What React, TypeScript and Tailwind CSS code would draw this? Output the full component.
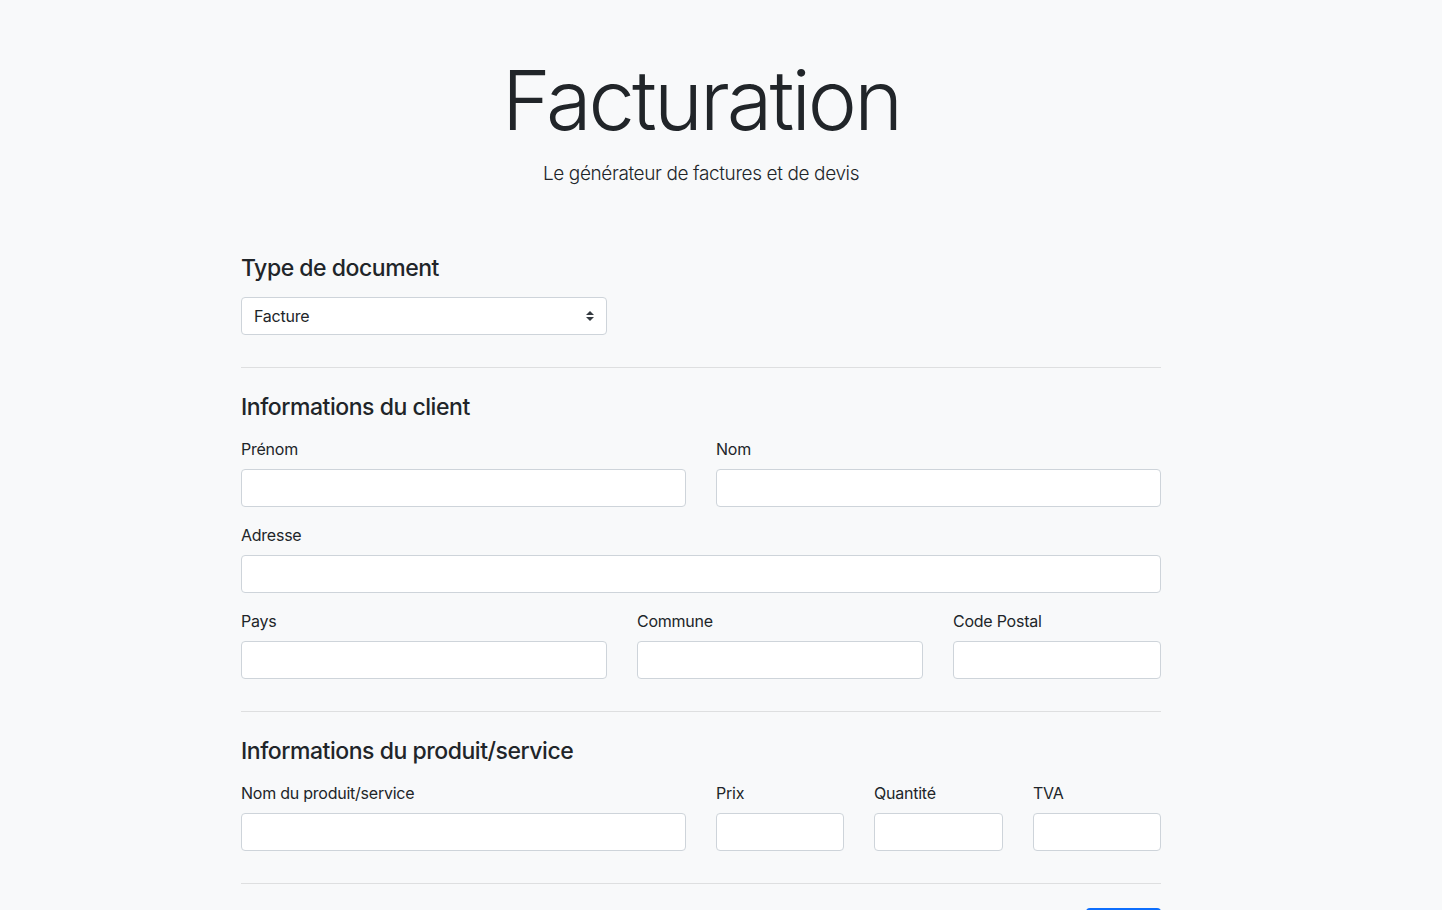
import React from "react";

const inputCls =
  "block w-full h-[38px] rounded-[4px] border border-[#ced4da] bg-white px-3 text-[16px] text-[#495057] outline-none";

function Field({ label, className = "" }: { label: string; className?: string }) {
  return (
    <div className={className}>
      <label className="block text-[16px] leading-[24px] mb-2 tracking-[-0.015em]">{label}</label>
      <input type="text" className={inputCls} />
    </div>
  );
}

export default function App() {
  return (
    <div
      className="min-h-[960px] w-full bg-[#f8f9fa] text-[#212529]"
      style={{ fontFamily: "Inter, 'Noto Sans', sans-serif" }}
    >
      <div className="mx-auto w-[960px] pr-[40px]">
        <div className="w-[920px] pt-[52px]">
          <h1 className="text-center text-[83px] leading-[96px] font-light tracking-[-0.035em]">
            Facturation
          </h1>
          <p className="mt-[11px] text-center text-[19px] leading-[30px] font-light tracking-[-0.02em]">
            Le générateur de factures et de devis
          </p>

          <h4 className="mt-[65px] text-[23px] leading-[29px] font-medium tracking-[-0.02em]">
            Type de document
          </h4>
          <div className="mt-[14px] relative w-[366px]">
            <select className="block w-full h-[38px] appearance-none rounded-[4px] border border-[#ced4da] bg-white pl-3 pr-8 text-[16px] text-[#212529] outline-none tracking-[-0.015em]">
              <option>Facture</option>
              <option>Devis</option>
            </select>
            <svg
              className="pointer-events-none absolute right-[13px] top-[14px]"
              width="8"
              height="10"
              viewBox="0 0 4 5"
            >
              <path d="M2 0L0 2h4zm0 5L0 3h4z" fill="#343a40" />
            </svg>
          </div>

          <hr className="mt-8 border-0 border-t border-[rgba(0,0,0,0.1)]" />

          <h4 className="mt-[25px] text-[23px] leading-[29px] font-medium tracking-[-0.02em]">
            Informations du client
          </h4>
          <div className="mt-[15px] grid grid-cols-2 gap-x-[30px]">
            <Field label="Prénom" />
            <Field label="Nom" />
          </div>
          <Field label="Adresse" className="mt-4" />
          <div className="mt-4 grid grid-cols-[366px_286px_208px] gap-x-[30px]">
            <Field label="Pays" />
            <Field label="Commune" />
            <Field label="Code Postal" />
          </div>

          <hr className="mt-8 border-0 border-t border-[rgba(0,0,0,0.1)]" />

          <h4 className="mt-[25px] text-[23px] leading-[29px] font-medium tracking-[-0.02em]">
            Informations du produit/service
          </h4>
          <div className="mt-[15px] grid grid-cols-[445px_128px_129px_128px] gap-x-[30px]">
            <Field label="Nom du produit/service" />
            <Field label="Prix" />
            <Field label="Quantité" />
            <Field label="TVA" />
          </div>

          <hr className="mt-8 border-0 border-t border-[rgba(0,0,0,0.1)]" />

          <div className="mt-6 flex justify-end">
            <button className="h-[38px] w-[75px] rounded-[4px] bg-[#0d6efd] text-[16px] text-white">
              Valider
            </button>
          </div>
        </div>
      </div>
    </div>
  );
}
